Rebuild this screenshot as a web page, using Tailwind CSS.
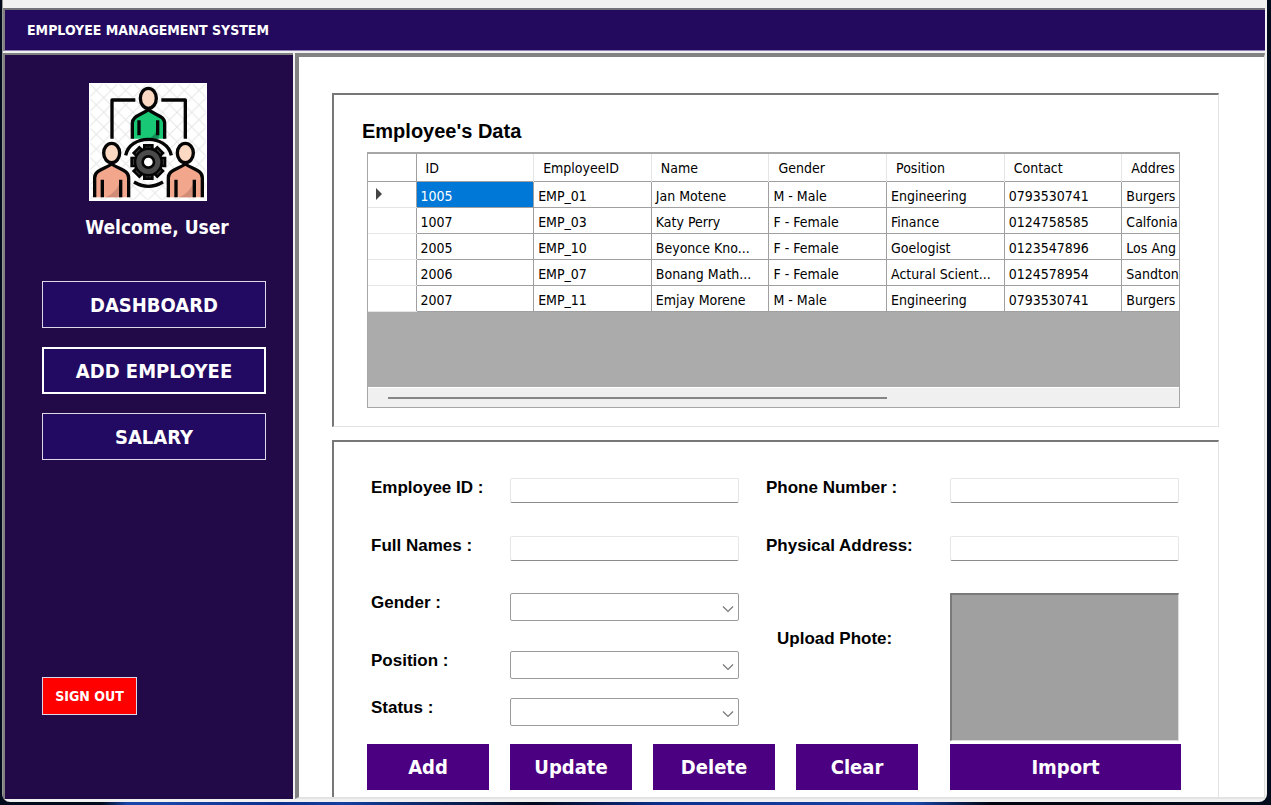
<!DOCTYPE html>
<html lang="en">
<head>
<meta charset="utf-8">
<title>Employee Management System</title>
<script src="https://cdn.jsdelivr.net/npm/@tailwindcss/browser@4"></script>
</head>
<body class="min-h-screen bg-[linear-gradient(90deg,#020b1c_0_8%,#1745a8_10%_13%,#0c2f8c_22%,#123fa0_27%,#02081c_42%,#0c2f8c_52%,#1745a8_72%,#02040f_78%,#020b1c_100%)] font-['DejaVu_Sans_Condensed','DejaVu_Sans',sans-serif] text-black">
<div class="min-h-screen border-x-2 border-[#020b1c] pr-[2px] pb-[3px]">
<div class="flex min-h-[802px] flex-col overflow-hidden rounded-b-lg border-l border-[#9a9a9a] bg-[#f1f1f1] pr-[2px] pb-[3px]">
  <div class="h-2"></div>
  <header class="flex h-[43px] items-center border-t-2 border-b-1 border-l-2 border-t-[#73737a] border-b-[#8d80b0] border-l-[#808080] bg-[#230a5e] pl-[22px]">
    <h1 class="text-sm font-bold text-white">EMPLOYEE MANAGEMENT SYSTEM</h1>
  </header>
  <div class="mt-[2px] flex flex-1">
    <aside class="flex w-[290px] shrink-0 flex-col items-center border-t-2 border-l-2 border-[#808080] bg-[#220a49] pt-7">
      <svg class="mr-[2px] size-[118px] shrink-0" viewBox="0 0 354 354" fill="none" stroke="#050505" stroke-width="10" role="img" aria-label="Team">
        <defs>
          <pattern id="mesh" width="44" height="44" patternUnits="userSpaceOnUse"><path d="M0 0L44 44M44 0L0 44" stroke="#e6e6e6" stroke-width="3"/></pattern>
          <g id="worker">
            <ellipse cx="68" cy="210" rx="24" ry="29" fill="#fbd9c3"/>
            <path fill="#f2a78d" stroke="none" d="M17 343V285C17 261 44 260 68 243C92 260 119 261 119 285V343Z"/>
            <path fill="#d08c76" stroke="none" d="M50 343C70 334 85 318 92 300V343Z"/>
            <path d="M17 343V285C17 261 44 260 68 243C92 260 119 261 119 285V343M40 290V343M95 290V343"/>
          </g>
          <g id="teeth"><path d="M166 198V187H190V198M166 276V287H190V276"/></g>
        </defs>
        <rect width="354" height="354" fill="#fff" stroke="none"/>
        <rect x="4" y="4" width="346" height="346" fill="url(#mesh)" stroke="none"/>
        <path stroke-linejoin="round" d="M69 167V51H139M217 51H289V167"/>
        <ellipse cx="178" cy="46" rx="24" ry="30" fill="#fbd9c3"/>
        <path fill="#18c875" stroke="none" d="M130 167V121C130 98 156 97 178 80C200 97 227 98 227 121V167Z"/>
        <path fill="#128f58" stroke="none" d="M180 167C200 155 206 140 209 116V167Z"/>
        <path d="M130 167V121C130 98 156 97 178 80C200 97 227 98 227 121V167M150 112V157M206 112V157"/>
        <path d="M110 217C122 153 234 153 247 217M135 297Q178 323 222 297"/>
        <g fill="#4a4a4a" stroke-width="8">
          <use href="#teeth"/>
          <use href="#teeth" transform="rotate(45 178 237)"/>
          <use href="#teeth" transform="rotate(90 178 237)"/>
          <use href="#teeth" transform="rotate(135 178 237)"/>
          <circle cx="178" cy="237" r="40"/>
          <circle cx="178" cy="237" r="17" fill="#fff"/>
        </g>
        <use href="#worker"/>
        <use href="#worker" x="221"/>
      </svg>
      <p class="mt-3 pl-4 text-[19px] leading-7 font-bold text-white">Welcome, User</p>
      <nav class="mt-10 flex w-full flex-col gap-[19px] pr-[27px] pl-[37px] text-xl font-bold text-white">
        <button class="h-[47px] border border-[#dcd8e8] bg-[#220962]">DASHBOARD</button>
        <button class="h-[47px] border-2 border-white bg-[#220962]">ADD EMPLOYEE</button>
        <button class="h-[47px] border border-[#dcd8e8] bg-[#220962]">SALARY</button>
      </nav>
      <button class="mt-auto mb-[84px] ml-[37px] h-[38px] w-[95px] self-start border border-[#dcd8e8] bg-[#ff0000] text-sm font-bold text-white">SIGN OUT</button>
    </aside>
    <main class="ml-[2px] flex min-w-0 flex-1 flex-col border-t-4 border-r border-b-2 border-l-4 border-t-[#828282] border-r-[#dededa] border-b-[#e3e3e3] border-l-[#828282] bg-white pt-9 pr-[45px] pl-[33px]">
      <section class="h-[334px] border-t-2 border-r border-b border-l-2 border-t-[#777777] border-r-[#e3e3e3] border-b-[#e3e3e3] border-l-[#777777] pt-6 pr-[38px] pl-[33px]">
        <h2 class="-ml-[5px] font-['Liberation_Sans',sans-serif] text-xl leading-6 font-bold">Employee's Data</h2>
        <div class="mt-[9px] flex h-[256px] flex-col overflow-hidden border border-t-2 border-[#a6a6a6] bg-[#ababab] text-sm">
          <table class="w-[872px] table-fixed border-collapse bg-white">
            <colgroup><col class="w-[48px]"><col span="7"></colgroup>
            <thead>
              <tr class="h-[27px] border-b border-[#a0a0a0] text-left [&>th]:border-r [&>th]:border-[#e5e5e5] [&>th]:pt-[2px] [&>th]:pl-[9px] [&>th]:font-normal">
                <th class="border-r-[#a0a0a0]!"></th><th>ID</th><th>EmployeeID</th><th>Name</th><th>Gender</th><th>Position</th><th>Contact</th><th>Addres</th>
              </tr>
            </thead>
            <tbody id="rows"></tbody>
          </table>
          <div class="mt-auto flex h-[20px] items-center border-t border-white bg-[#f0f0f0] pl-5"><div class="h-[2px] w-[499px] bg-[#868686]"></div></div>
        </div>
      </section>
      <form class="mt-[13px] flex-1 border-t-2 border-r border-l-2 border-t-[#777777] border-r-[#e3e3e3] border-l-[#777777] pt-9 pr-[37px] pb-[7px] pl-[33px]">
        <div class="grid grid-cols-[368fr_413fr] gap-[27px] pr-[2px] pl-1 font-['Liberation_Sans',sans-serif] text-[17px] leading-5 font-bold">
          <div class="flex flex-col">
            <div class="flex h-[25px]"><label for="eid" class="w-[139px]">Employee ID :</label><input id="eid" class="min-w-0 flex-1 rounded-xs border border-[#e6e6e6] border-b-[#8a8a8a]"></div>
            <div class="mt-[33px] flex h-[25px]"><label for="names" class="w-[139px]">Full Names :</label><input id="names" class="min-w-0 flex-1 rounded-xs border border-[#e6e6e6] border-b-[#8a8a8a]"></div>
            <div class="mt-8 flex h-7"><label for="gender" class="w-[139px]">Gender :</label><span class="relative flex min-w-0 flex-1"><select id="gender" class="w-full appearance-none rounded-xs border border-[#9a9a9a] bg-white"><option></option></select><svg class="pointer-events-none absolute right-[5px] bottom-2 h-[8px] w-[12px]" viewBox="0 0 12 8" fill="none" stroke="#777" stroke-width="1.2"><path d="M1 1.5L6 6.500L11 1.500"/></svg></span></div>
            <div class="mt-[30px] flex h-7"><label for="position" class="w-[139px]">Position :</label><span class="relative flex min-w-0 flex-1"><select id="position" class="w-full appearance-none rounded-xs border border-[#9a9a9a] bg-white"><option></option></select><svg class="pointer-events-none absolute right-[5px] bottom-2 h-[8px] w-[12px]" viewBox="0 0 12 8" fill="none" stroke="#777" stroke-width="1.2"><path d="M1 1.5L6 6.500L11 1.500"/></svg></span></div>
            <div class="mt-[19px] flex h-7"><label for="status" class="w-[139px]">Status :</label><span class="relative flex min-w-0 flex-1"><select id="status" class="w-full appearance-none rounded-xs border border-[#9a9a9a] bg-white"><option></option></select><svg class="pointer-events-none absolute right-[5px] bottom-2 h-[8px] w-[12px]" viewBox="0 0 12 8" fill="none" stroke="#777" stroke-width="1.2"><path d="M1 1.5L6 6.500L11 1.500"/></svg></span></div>
          </div>
          <div class="flex flex-col">
            <div class="flex h-[25px]"><label for="phone" class="w-[184px]">Phone Number :</label><input id="phone" class="min-w-0 flex-1 rounded-xs border border-[#e6e6e6] border-b-[#8a8a8a]"></div>
            <div class="mt-[33px] flex h-[25px]"><label for="address" class="w-[184px]">Physical Address:</label><input id="address" class="min-w-0 flex-1 rounded-xs border border-[#e6e6e6] border-b-[#8a8a8a]"></div>
            <div class="mt-8 flex h-[148px]"><label for="import" class="w-[184px] pt-9 pl-[11px]">Upload Phote:</label><div class="flex-1 border-t-2 border-r border-b border-l-2 border-t-[#7a7a7a] border-r-[#dddddd] border-b-[#dddddd] border-l-[#7a7a7a] bg-[#a0a0a0]"></div></div>
          </div>
        </div>
        <div class="mt-[3px] flex gap-8 text-xl font-bold text-white">
          <div class="grid flex-1 grid-cols-4 gap-[21px]">
            <button type="button" class="h-[46px] bg-[#4b0082]">Add</button>
            <button type="button" class="h-[46px] bg-[#4b0082]">Update</button>
            <button type="button" class="h-[46px] bg-[#4b0082]">Delete</button>
            <button type="button" class="h-[46px] bg-[#4b0082]">Clear</button>
          </div>
          <button type="button" id="import" class="h-[46px] w-[231px] bg-[#4b0082]">Import</button>
        </div>
      </form>
    </main>
  </div>
</div>
</div>
<script>
const data = [
  ["1005","EMP_01","Jan Motene","M - Male","Engineering","0793530741","Burgers"],
  ["1007","EMP_03","Katy Perry","F - Female","Finance","0124758585","Calfonia"],
  ["2005","EMP_10","Beyonce Kno...","F - Female","Goelogist","0123547896","Los Ang"],
  ["2006","EMP_07","Bonang Math...","F - Female","Actural Scient...","0124578954","Sandton"],
  ["2007","EMP_11","Emjay Morene","M - Male","Engineering","0793530741","Burgers"]
];
document.getElementById("rows").innerHTML = data.map((r, i) =>
  `<tr class="h-[26px]"><td class="border-r border-b border-r-[#a0a0a0] border-b-[#e5e5e5] pl-2">${i ? "" : '<svg class="h-[12px] w-[6px]" viewBox="0 0 6 12" fill="#444"><path d="M0 0L6 6L0 12Z"/></svg>'}</td>` +
  r.map((c, j) => `<td class="truncate border border-[#a0a0a0] px-1 pt-[3px] ${i + j ? "" : "bg-[#0078d7] text-white"}">${c}</td>`).join("") + "</tr>"
).join("");
</script>
</body>
</html>
